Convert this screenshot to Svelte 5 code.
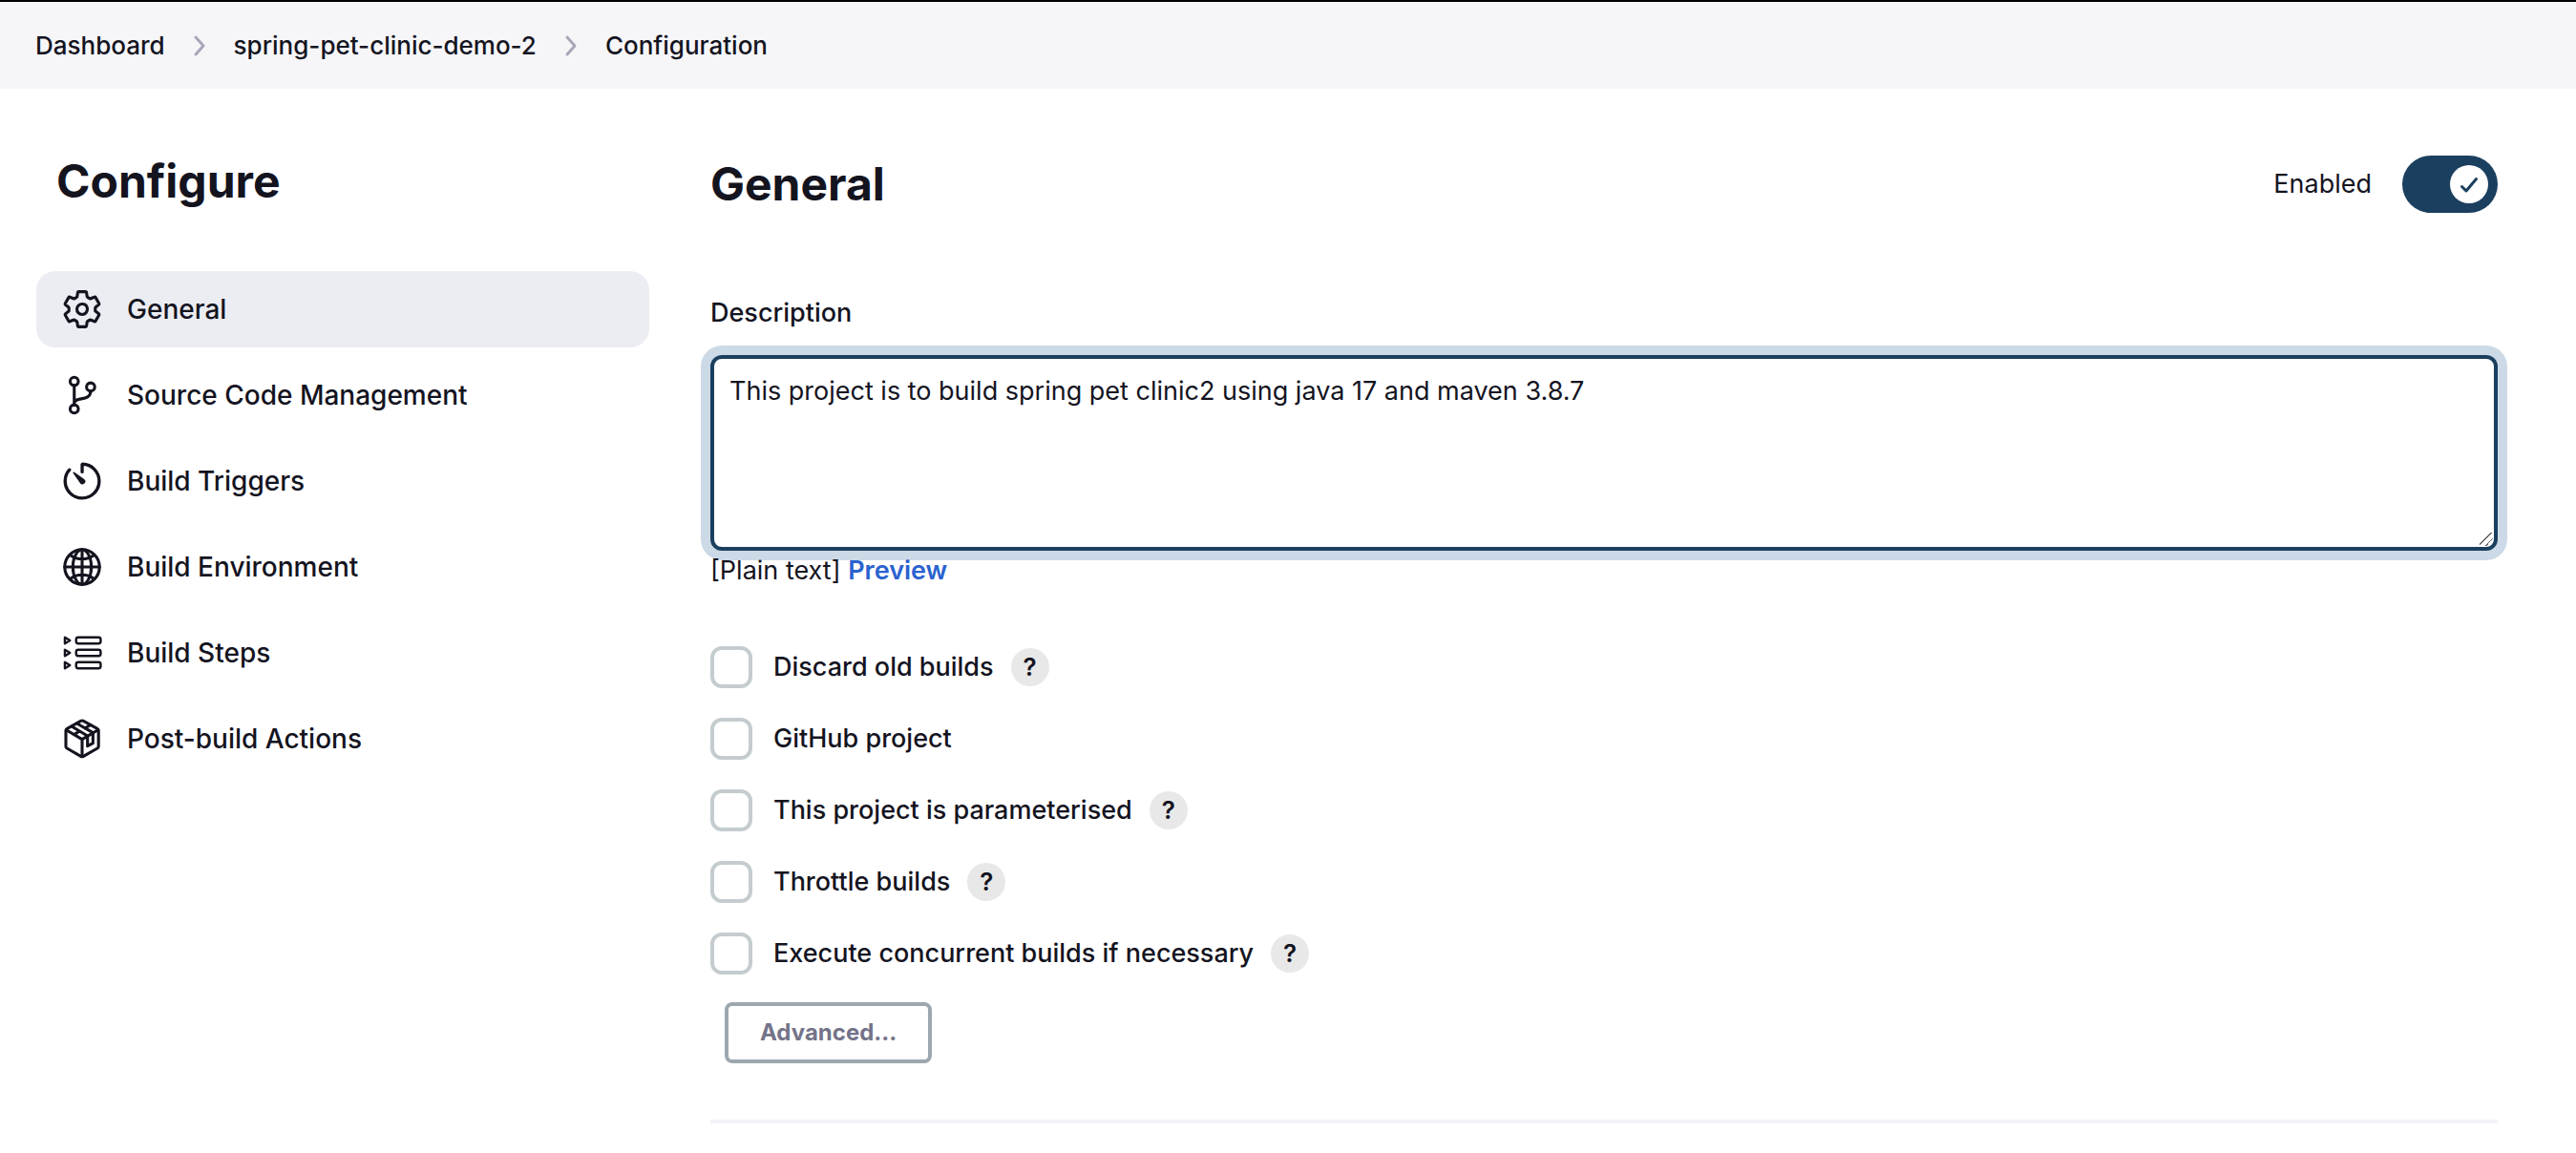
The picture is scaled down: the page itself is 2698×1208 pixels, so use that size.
<script>
  const crumbs = ['Dashboard', 'spring-pet-clinic-demo-2', 'Configuration'];
  const sections = [
    { label: 'General', icon: 'gear' },
    { label: 'Source Code Management', icon: 'branch' },
    { label: 'Build Triggers', icon: 'timer' },
    { label: 'Build Environment', icon: 'globe' },
    { label: 'Build Steps', icon: 'steps' },
    { label: 'Post-build Actions', icon: 'cube' },
  ];
  let options = $state([
    { label: 'Discard old builds', help: true, checked: false },
    { label: 'GitHub project', help: false, checked: false },
    { label: 'This project is parameterised', help: true, checked: false },
    { label: 'Throttle builds', help: true, checked: false },
    { label: 'Execute concurrent builds if necessary', help: true, checked: false },
  ]);
  let active = $state('General');
  let enabled = $state(true);
  let description = $state('This project is to build spring pet clinic2 using java 17 and maven 3.8.7');
</script>

<header>
  <nav class="crumbs" aria-label="Breadcrumb">
    {#each crumbs as crumb, i}
      {#if i > 0}
        <svg class="chevron" viewBox="0 0 14 24" aria-hidden="true"><path d="M3 3l8 9-8 9" /></svg>
      {/if}
      <a href="#top">{crumb}</a>
    {/each}
  </nav>
</header>

<div class="page">
  <aside>
    <h1>Configure</h1>
    <nav class="sections" aria-label="Sections">
      {#each sections as s}
        <button type="button" class:active={active === s.label} onclick={() => (active = s.label)}>
          <svg class="icon" viewBox="0 0 512 512" aria-hidden="true">
            {#if s.icon === 'gear'}
              <path d="M262.29 192.31a64 64 0 1057.4 57.4 64.13 64.13 0 00-57.4-57.4zM416.39 256a154.34 154.34 0 01-1.53 20.79l45.21 35.46a10.81 10.81 0 012.45 13.75l-42.77 74a10.81 10.81 0 01-13.14 4.59l-44.9-18.08a16.11 16.11 0 00-15.17 1.75A164.48 164.48 0 01325 400.8a15.94 15.94 0 00-8.82 12.14l-6.73 47.89a11.08 11.08 0 01-10.68 9.17h-85.54a11.11 11.11 0 01-10.69-8.87l-6.72-47.82a16.07 16.07 0 00-9-12.22 155.3 155.3 0 01-21.46-12.57 16 16 0 00-15.11-1.71l-44.89 18.07a10.81 10.81 0 01-13.14-4.58l-42.77-74a10.8 10.8 0 012.45-13.75l38.21-30a16.05 16.05 0 006-14.08c-.36-4.17-.58-8.33-.58-12.5s.21-8.27.58-12.35a16 16 0 00-6.07-13.94l-38.19-30A10.81 10.81 0 0149.48 186l42.77-74a10.81 10.81 0 0113.14-4.59l44.9 18.08a16.11 16.11 0 0015.17-1.75A164.48 164.48 0 01187 111.2a15.94 15.94 0 008.82-12.14l6.73-47.89A11.08 11.08 0 01213.23 42h85.54a11.11 11.11 0 0110.69 8.87l6.72 47.82a16.07 16.07 0 009 12.22 155.3 155.3 0 0121.46 12.57 16 16 0 0015.11 1.71l44.89-18.07a10.81 10.81 0 0113.14 4.58l42.77 74a10.8 10.8 0 01-2.45 13.75l-38.21 30a16.05 16.05 0 00-6.05 14.08c.33 4.14.55 8.3.55 12.47z" />
            {:else if s.icon === 'branch'}
              <circle cx="160" cy="88" r="50" /><circle cx="160" cy="424" r="50" /><circle cx="360" cy="156" r="50" />
              <path d="M160 374V138M360 206c0 134-200 62-200 150" />
            {:else if s.icon === 'timer'}
              <path d="M112.91 128A191.85 191.85 0 0064 254c-1.18 106.35 85.65 193.8 192 194 106.2.2 192-85.83 192-192 0-104.54-83.55-189.61-187.5-192a4.36 4.36 0 00-4.5 4.37V152" transform="translate(-20 -20) scale(1.08)" />
              <path class="solid" transform="translate(-20 -20) scale(1.08)" d="M233.38 278.63l-79-113a8.13 8.13 0 0111.32-11.32l113 79a32.5 32.5 0 01-37.25 53.26 33.21 33.21 0 01-8.07-7.94z" />
            {:else if s.icon === 'globe'}
              <path d="M256 44C139 44 44 139 44 256s95 212 212 212 212-95 212-212S373 44 256 44z" />
              <path d="M256 44c-58 0-112.670 95-112.670 212S198 468 256 468s112.670-95 112.670-212S314 44 256 44z" />
              <path d="M117.33 117.33c38.24 27.15 86.38 43.34 138.67 43.34s100.43-16.19 138.67-43.34M394.67 394.67c-38.24-27.15-86.38-43.34-138.67-43.34s-100.43 16.19-138.67 43.34M256 44v424M468 256H44" />
            {:else if s.icon === 'steps'}
              <g class="thin">
                <rect x="183" y="67" width="299" height="76" rx="26" />
                <rect x="183" y="218" width="299" height="76" rx="26" />
                <rect x="183" y="369" width="299" height="76" rx="26" />
                <path d="M46 67v76l62-38zM46 218v76l62-38zM46 369v76l62-38z" />
              </g>
            {:else}
              <path d="M240 40q16-9 32 0l168 92q16 9 16 26v190q0 16-14 24L272 470q-16 9-32 0L72 372q-14-8-14-24V158q0-17 16-26z" />
              <path d="M62 148l194 116 194-116M256 264v208" />
              <path d="M128 105l194 116v124l66-35V182L194 70M163 202l62-39M291 128l62-39" />
            {/if}
          </svg>
          <span>{s.label}</span>
        </button>
      {/each}
    </nav>
  </aside>

  <main>
    <div class="title-row">
      <h2>General</h2>
      <label class="toggle">
        <span>Enabled</span>
        <input type="checkbox" role="switch" bind:checked={enabled} />
        <span class="track" class:on={enabled}>
          <span class="knob">
            <svg viewBox="0 0 40 40" aria-hidden="true"><path d="M12.500 22.500l4.500 4.500 10.500-12.500" /></svg>
          </span>
        </span>
      </label>
    </div>

    <label class="field-label" for="description">Description</label>
    <textarea id="description" bind:value={description}></textarea>
    <p class="format">[Plain text] <a href="#preview">Preview</a></p>

    <div class="options">
      {#each options as o}
        <div class="option">
          <label>
            <input type="checkbox" bind:checked={o.checked} />
            <span>{o.label}</span>
          </label>
          {#if o.help}
            <button type="button" class="help" aria-label={`Help for ${o.label}`}>?</button>
          {/if}
        </div>
      {/each}
    </div>

    <button type="button" class="advanced">Advanced...</button>
    <hr />
  </main>
</div>

<style>
  :global(body) {
    margin: 0;
    background: #fff;
    color: #14141f;
    font: 400 27px/42px Inter, "Liberation Sans", sans-serif;
  }
  :global(*) { box-sizing: border-box; }
  button, textarea { font: inherit; color: inherit; }
  a { text-decoration: none; color: inherit; }

  header {
    border-top: 2px solid #000;
    background: #f6f6f9;
    padding: 24px 37px;
  }
  .crumbs {
    display: flex;
    align-items: center;
    font-size: 26px;
    line-height: 43px;
    font-weight: 450;
  }
  .chevron {
    width: 14px;
    height: 24px;
    margin: 0 29px;
    fill: none;
    stroke: #a7a7b8;
    stroke-width: 3;
    stroke-linecap: round;
    stroke-linejoin: round;
  }

  .page {
    display: grid;
    grid-template-columns: 642px minmax(0, 1fr);
    column-gap: 64px;
    padding: 70px 82px 31px 38px;
  }
  h1, h2 {
    margin: 0;
    font-size: 48px;
    line-height: 60px;
    font-weight: 700;
  }
  h1 { margin: -3px 0 64px; padding-left: 21px; }

  .sections {
    display: flex;
    flex-direction: column;
    gap: 10px;
  }
  .sections button {
    display: flex;
    align-items: center;
    gap: 25px;
    height: 80px;
    padding: 0 26px;
    border: 0;
    border-radius: 20px;
    background: none;
    font-size: 28px;
    font-weight: 500;
    text-align: left;
  }
  .sections button.active { background: #ecedf3; }
  .icon {
    flex: none;
    width: 44px;
    height: 44px;
    fill: none;
    stroke: #14141f;
    stroke-width: 36;
    stroke-linecap: round;
    stroke-linejoin: round;
  }
  .solid { fill: #14141f; stroke: none; }
  .thin { stroke-width: 28; }

  main {
    display: flex;
    flex-direction: column;
    align-items: stretch;
  }
  .title-row {
    display: flex;
    justify-content: space-between;
    align-items: center;
    margin-bottom: 84px;
  }
  .toggle {
    display: flex;
    align-items: center;
    position: relative;
    gap: 32px;
  }
  .toggle input {
    position: absolute;
    right: 0;
    width: 100px;
    height: 60px;
    margin: 0;
    opacity: 0;
  }
  .track {
    display: flex;
    width: 100px;
    height: 60px;
    padding: 10px;
    border-radius: 30px;
    background: #8d95a0;
  }
  .track.on {
    justify-content: flex-end;
    background: #1b3f5f;
  }
  .knob {
    width: 40px;
    height: 40px;
    border-radius: 50%;
    background: #fff;
  }
  .knob svg {
    display: block;
    fill: none;
    stroke: #1b3f5f;
    stroke-width: 3;
    stroke-linecap: round;
    stroke-linejoin: round;
  }

  .field-label { margin-bottom: 23px; font-weight: 450; }
  textarea {
    display: block;
    height: 205px;
    padding: 13px 16px;
    border: 4px solid #1b3f5f;
    border-radius: 12px;
    outline: 0;
    box-shadow: 0 0 0 10px #ccd9e6;
    background: #fff;
    resize: vertical;
  }
  textarea::-webkit-resizer {
    background: linear-gradient(135deg, transparent 42%, #666 42% 49%, transparent 49% 68%, #666 68% 75%, transparent 75%) 0 0 / 14px 14px no-repeat;
  }
  .format { margin: 0 0 58px; }
  .format a { color: #2a62cf; font-weight: 600; }

  .options {
    display: flex;
    flex-direction: column;
    gap: 31px;
  }
  .option {
    display: flex;
    align-items: center;
    gap: 18px;
    min-height: 44px;
  }
  .option label {
    display: flex;
    align-items: center;
    gap: 22px;
    font-weight: 450;
  }
  .option input {
    appearance: none;
    width: 44px;
    height: 44px;
    margin: 0;
    border: 4px solid #c4cccf;
    border-radius: 12px;
    background: #fff;
  }
  .option input:checked { background: #1b3f5f; }
  .help {
    width: 40px;
    height: 40px;
    padding: 0;
    border: 0;
    border-radius: 50%;
    background: #e8e8e8;
    font-size: 26px;
    line-height: 40px;
    font-weight: 600;
  }
  .advanced {
    align-self: flex-start;
    height: 64px;
    margin: 29px 0 59px 15px;
    padding: 0 33px;
    border: 4px solid #9ca8ae;
    border-radius: 8px;
    background: #fff;
    color: #737389;
    font-size: 24px;
    line-height: 56px;
    font-weight: 700;
  }
  hr {
    width: 100%;
    height: 4px;
    margin: 0;
    border: 0;
    background: #f3f3f8;
  }
</style>
